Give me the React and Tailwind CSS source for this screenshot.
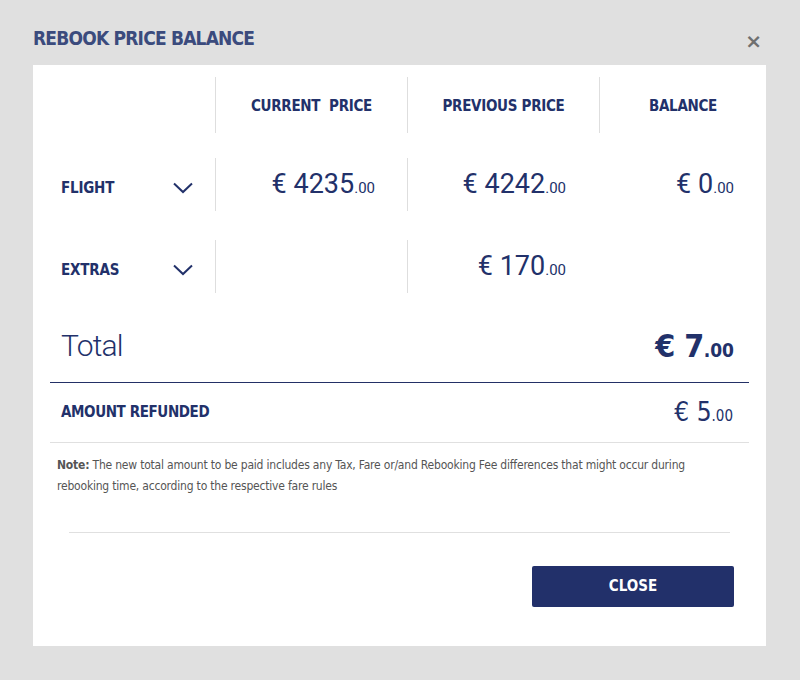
import React from "react";

const NARROW = "font-['Liberation_Sans_Narrow','DejaVu_Sans_Condensed',sans-serif]";
const ROBOTO = "font-['Roboto','Liberation_Sans',sans-serif]";

const Chevron = () => (
  <svg width="20" height="12" viewBox="0 0 20 12" fill="none">
    <path d="M1 1.5 L10 10 L19 1.5" stroke="#22316a" strokeWidth="2" />
  </svg>
);

const Price = ({ value }) => (
  <span className={`${ROBOTO} text-[#22316a]`}>
    <span className="text-[27px]">€ {value}</span>
    <span className="text-[15px]">.00</span>
  </span>
);

const Row = ({ label, current, previous, balance }) => (
  <div className="flex items-stretch h-[53px]">
    <div className="w-[182px] flex items-center justify-between pl-[28px] pr-[22px] pt-[7px]">
      <span className={`${NARROW} font-bold text-[15px] tracking-[-0.2px] text-[#22316a]`}>{label}</span>
      <Chevron />
    </div>
    <div className="w-[192px] border-l border-[#dedede] flex items-center justify-end pr-[32px]">
      {current && <Price value={current} />}
    </div>
    <div className="w-[192px] border-l border-[#dedede] flex items-center justify-end pr-[33px]">
      {previous && <Price value={previous} />}
    </div>
    <div className="w-[167px] flex items-center justify-end pr-[32px]">
      {balance && <Price value={balance} />}
    </div>
  </div>
);

export default function App() {
  return (
    <div className="w-[800px] h-[680px] bg-[#e0e0e0] pt-[26px] pl-[33px]">
      <div className="w-[733px] flex items-end justify-between h-[39px]">
        <h1 className={`${NARROW} font-bold text-[19px] text-[#3b4b7d] tracking-[-0.8px] leading-none mb-[17px]`}>
          REBOOK PRICE BALANCE
        </h1>
        <span className="text-[#707070] text-[20px] font-bold leading-none mb-[14px] mr-[4px] font-['DejaVu_Sans',sans-serif]">×</span>
      </div>
      <div className="w-[733px] h-[581px] bg-white pt-[12px]">
        {/* header */}
        <div className="flex items-stretch h-[56px]">
          <div className="w-[182px]" />
          {["CURRENT  PRICE", "PREVIOUS PRICE"].map((h) => (
            <div
              key={h}
              className={`w-[192px] border-l border-[#dedede] flex items-center justify-center pt-[2px] ${NARROW} font-bold text-[15px] tracking-[-0.3px] text-[#22316a] whitespace-pre`}
            >
              {h}
            </div>
          ))}
          <div className={`w-[167px] border-l border-[#dedede] flex items-center justify-center pt-[2px] ${NARROW} font-bold text-[15px] tracking-[-0.3px] text-[#22316a]`}>
            BALANCE
          </div>
        </div>
        <div className="h-[25px]" />
        <Row label="FLIGHT" current="4235" previous="4242" balance="0" />
        <div className="h-[29px]" />
        <Row label="EXTRAS" previous="170" />

        <div className="mx-[17px]">
          <div className="h-[90px] flex items-center justify-between border-b border-[#233066] pl-[11px] pr-[15px] pt-[16px]">
            <span className={`${ROBOTO} font-light text-[30px] tracking-[-0.8px] text-[#22316a]`}>Total</span>
            <span className={`${NARROW} font-bold text-[#22316a]`}>
              <span className="text-[32px] tracking-[-0.5px]">€ 7</span>
              <span className="text-[19px]">.00</span>
            </span>
          </div>
          <div className="h-[60px] flex items-center justify-between border-b border-[#e0e0e0] pl-[11px] pr-[16px]">
            <span className={`${NARROW} font-bold text-[15px] tracking-[-0.4px] text-[#22316a]`}>AMOUNT REFUNDED</span>
            <span className={`${NARROW} text-[#22316a]`}>
              <span className="text-[26px]">€ 5</span>
              <span className="text-[15px]">.00</span>
            </span>
          </div>
          <p className={`${NARROW} text-[12px] leading-[21px] tracking-[-0.2px] text-[#555555] pl-[7px] pt-[12px] pr-[20px]`}>
            <span className="font-bold">Note:</span> The new total amount to be paid includes any Tax, Fare or/and
            Rebooking Fee differences that might occur during rebooking time, according to the respective fare rules
          </p>
        </div>
        <div className="mx-[36px] mt-[35px] border-t border-[#e0e0e0]" />
        <div className="flex justify-end pr-[32px] mt-[33px]">
          <button className={`w-[202px] h-[41px] bg-[#22306a] rounded-[2px] text-white ${NARROW} font-bold text-[15px]`}>
            CLOSE
          </button>
        </div>
      </div>
    </div>
  );
}
